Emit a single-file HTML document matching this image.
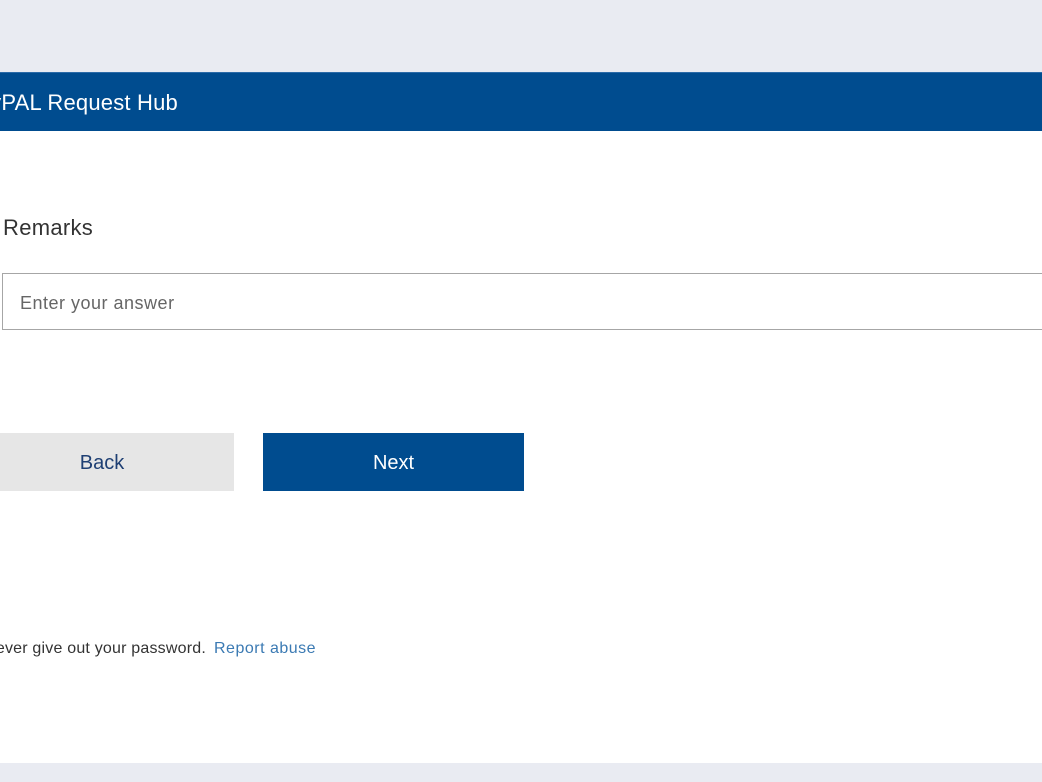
<!DOCTYPE html>
<html><head><meta charset="utf-8"><style>
body{margin:0;width:1042px;height:782px;overflow:hidden;background:#e9ebf2;font-family:"Liberation Sans",sans-serif;position:relative}
.hdr{position:absolute;left:0;top:72px;width:1042px;height:59px;background:#004c8f;border-top:1px solid #2a6aa8}
.hdr span{position:absolute;right:calc(1042px - 178px);top:17px;color:#fff;font-size:22px;white-space:nowrap;letter-spacing:0.2px}
.card{position:absolute;left:0;top:131px;width:1042px;height:632px;background:#fff}
.lbl{position:absolute;left:3px;top:215px;font-size:22px;color:#333;letter-spacing:0.3px}
.inp{position:absolute;left:2px;top:273px;width:1050px;height:57px;border:1px solid #a6a6a6;box-sizing:border-box;background:#fff}
.inp span{position:absolute;left:17px;top:19px;font-size:18px;color:#666;letter-spacing:0.5px}
.btn{position:absolute;top:433px;height:58px;line-height:60px;text-align:center;font-size:20px}
.back{left:-30px;width:264px;background:#e6e6e6;color:#1e3f73}
.next{left:263px;width:261px;background:#004c8f;color:#fff}
.ft{position:absolute;right:calc(1042px - 206px);top:640px;font-size:16px;color:#333;white-space:nowrap;letter-spacing:0.2px}
.ra{position:absolute;left:214px;top:640px;font-size:16px;color:#3b7ab3;letter-spacing:0.5px}
</style></head><body>
<div class="hdr"><span>MyPAL Request Hub</span></div>
<div class="card"></div>
<div class="lbl">Remarks</div>
<div class="inp"><span>Enter your answer</span></div>
<div class="btn back">Back</div>
<div class="btn next">Next</div>
<div class="ft">Never give out your password.</div>
<div class="ra">Report abuse</div>
</body></html>
